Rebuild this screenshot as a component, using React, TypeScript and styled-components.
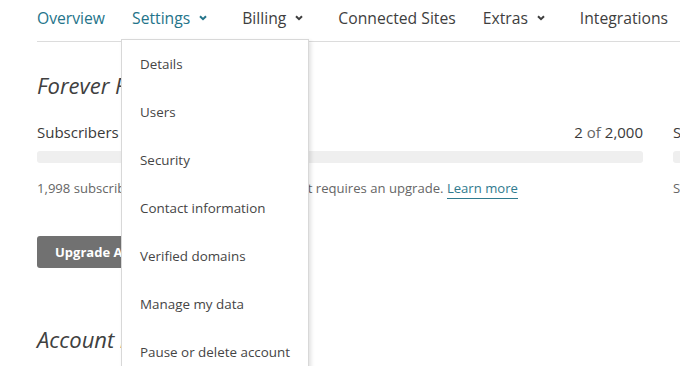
import { createGlobalStyle, styled } from "styled-components";

const Global = createGlobalStyle`
  html, body {
    margin: 0;
    padding: 0;
    background: #fff;
    overflow: hidden;
  }
  body {
    font-family: "Open Sans", "Noto Sans", sans-serif;
    color: #333;
  }
`;

const Page = styled.div`
  position: relative;
  width: 680px;
  height: 366px;
  overflow: hidden;
`;

const Nav = styled.nav`
  display: flex;
  align-items: center;
  gap: 27px;
  height: 35px;
  padding-bottom: 6px;
  margin-left: 37px;
  border-bottom: 1px solid #dcdcdc;
  white-space: nowrap;
`;

const NavItem = styled.div<{ $teal?: boolean }>`
  position: relative;
  display: flex;
  align-items: center;
  font-size: 15.7px;
  color: ${(p) => (p.$teal ? "#24748a" : "#3e3e3e")};
`;

const Chevron = styled.svg`
  width: 8px;
  height: 6px;
  margin: 1px 8px 0 9px;
`;

const Dropdown = styled.ul`
  position: absolute;
  top: 32px;
  left: -11px;
  width: 186px;
  margin: 0;
  padding: 0;
  list-style: none;
  background: #fff;
  border: 1px solid #d8d8d8;
  box-shadow: 2px 2px 4px rgba(0, 0, 0, 0.12);
  z-index: 10;
`;

const DropItem = styled.li`
  height: 48px;
  line-height: 48px;
  padding-left: 18px;
  font-size: 13.4px;
  color: #454545;
`;

const Content = styled.main`
  padding: 0 0 0 37px;
`;

const Heading = styled.h2<{ $top: number }>`
  margin: ${(p) => p.$top}px 0 0;
  font-size: 22px;
  line-height: 30px;
  font-style: italic;
  font-weight: 400;
  color: #404040;
  white-space: nowrap;
`;

const Meters = styled.div`
  display: grid;
  grid-template-columns: 606px 606px;
  gap: 30px;
  margin-top: 22px;
`;

const Meter = styled.div`
  display: flex;
  flex-direction: column;
`;

const MeterHead = styled.div`
  display: flex;
  justify-content: space-between;
  font-size: 15px;
  line-height: 20px;
  color: #3a3a3a;
`;

const Light = styled.span`
  color: #666;
`;

const Bar = styled.div`
  margin-top: 9px;
  height: 12px;
  border-radius: 3px;
  background: #efefef;
`;

const Note = styled.p`
  margin: 15px 0 0;
  font-size: 13.1px;
  line-height: 20px;
  color: #666;
  white-space: nowrap;
`;

const Link = styled.a`
  color: #307a8e;
  text-decoration: none;
  border-bottom: 1px solid #307a8e;
  padding-bottom: 1px;
`;

const Button = styled.button`
  display: block;
  margin-top: 38px;
  height: 32px;
  padding: 0 18px;
  border: 0;
  border-radius: 3px;
  background: #717171;
  color: #fff;
  font-family: inherit;
  font-size: 13px;
  font-weight: 700;
`;

const ChevronIcon = ({ color }: { color: string }) => (
  <Chevron viewBox="0 0 8 6">
    <path d="M1 1.2 L4 4.2 L7 1.2" fill="none" stroke={color} strokeWidth="2" />
  </Chevron>
);

const settingsItems = [
  "Details",
  "Users",
  "Security",
  "Contact information",
  "Verified domains",
  "Manage my data",
  "Pause or delete account",
];

export default function App() {
  return (
    <Page>
      <Global />
      <Nav>
        <NavItem $teal>Overview</NavItem>
        <NavItem $teal>
          Settings
          <ChevronIcon color="#24748a" />
          <Dropdown>
            {settingsItems.map((item) => (
              <DropItem key={item}>{item}</DropItem>
            ))}
          </Dropdown>
        </NavItem>
        <NavItem>
          Billing
          <ChevronIcon color="#3e3e3e" />
        </NavItem>
        <NavItem>Connected Sites</NavItem>
        <NavItem>
          Extras
          <ChevronIcon color="#3e3e3e" />
        </NavItem>
        <NavItem>Integrations</NavItem>
      </Nav>
      <Content>
        <Heading $top={28}>Forever Free</Heading>
        <Meters>
          <Meter>
            <MeterHead>
              <span>Subscribers</span>
              <span>
                2 <Light>of</Light> 2,000
              </span>
            </MeterHead>
            <Bar />
            <Note>
              1,998 subscribers left. Adding more than that requires an upgrade.{" "}
              <Link href="#">Learn more</Link>
            </Note>
          </Meter>
          <Meter>
            <MeterHead>
              <span>Sends</span>
              <span>
                0 <Light>of</Light> 10,000
              </span>
            </MeterHead>
            <Bar />
            <Note>Sends reset monthly.</Note>
          </Meter>
        </Meters>
        <Button>Upgrade Account</Button>
        <Heading $top={56}>Account info</Heading>
      </Content>
    </Page>
  );
}
